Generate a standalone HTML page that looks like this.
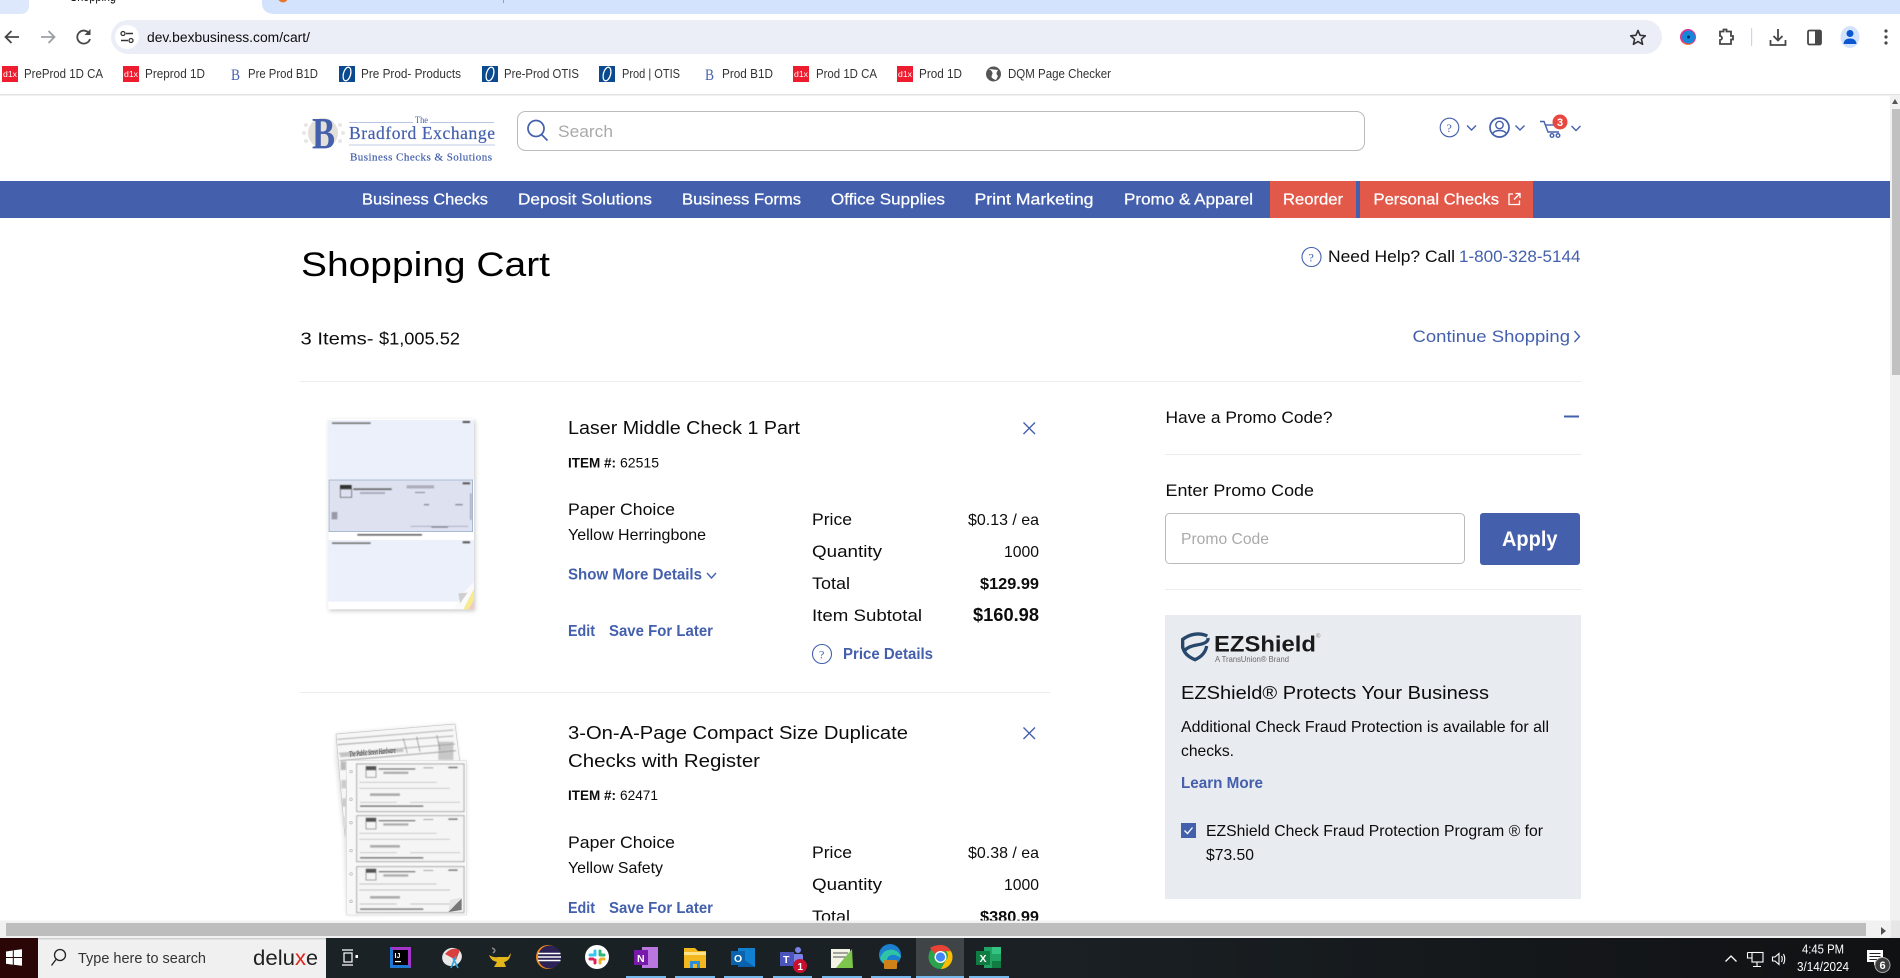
<!DOCTYPE html>
<html lang="en">
<head>
<meta charset="utf-8">
<title>Shopping Cart</title>
<style>
html,body{margin:0;padding:0;width:1900px;height:978px;overflow:hidden;background:#fff}
svg{display:block;position:absolute;left:0;top:0}
text{font-family:"Liberation Sans",sans-serif;fill:#0c0c0c;white-space:pre}
.serif{font-family:"Liberation Serif",serif}
.b{font-weight:700}
.blue{fill:#4460ad}
.bm{font-size:12.5px;fill:#333}
.w{fill:#fff}
.nav{font-size:16px;fill:#fff;font-weight:400;stroke:#fff;stroke-width:.25px}
.st{fill:none;stroke:#4460ad;stroke-width:1.4}
.tb{fill:none;stroke:#474747;stroke-width:1.8}
</style>
</head>
<body>
<svg width="1900" height="978" viewBox="0 0 1900 978" xmlns="http://www.w3.org/2000/svg">
<defs>
<filter id="bl" x="-10%" y="-10%" width="120%" height="120%"><feGaussianBlur stdDeviation="1.8"/></filter>
<filter id="sh" x="-10%" y="-10%" width="120%" height="120%"><feGaussianBlur stdDeviation="6"/></filter>
<linearGradient id="tbg" x1="0" x2="1" y1="0" y2="0"><stop offset="0" stop-color="#1b2327"/><stop offset=".55" stop-color="#1a2024"/><stop offset="1" stop-color="#101113"/></linearGradient>
</defs>

<!-- Browser chrome -->
<rect width="1900" height="95" fill="#fff"/>
<path d="M262 0H1900V14H276Q262 14 262 3Z" fill="#d3e3fd"/>
<path d="M0 0H29V5Q29 14 20 14H0Z" fill="#dde8fd"/>
<text x="70" y="1" font-size="13" fill="#333" textLength="46" lengthAdjust="spacingAndGlyphs">Shopping</text>
<circle cx="283" cy="-2.500" r="5" fill="#e8772e"/>
<rect x="503" y="0" width="1" height="3" fill="#8aa"/>

<path class="tb" d="M19 37H6M11.500 31L5.500 37L11.500 43"/>
<path fill="none" stroke="#9aa0a6" stroke-width="1.800" d="M41 37H54M48.500 31L54.500 37L48.500 43"/>
<path class="tb" d="M89.500 34A6.500 6.500 0 1 0 90 39"/>
<path d="M90.500 29V35H84.500Z" fill="#474747"/>

<rect x="111" y="20" width="1551" height="34" rx="17" fill="#ebeef7"/>
<circle cx="127" cy="37" r="12" fill="#fff"/>
<path fill="none" stroke="#333" stroke-width="1.400" d="M126 33.500H133M121 40.500H128"/>
<circle cx="123" cy="33.500" r="2" fill="none" stroke="#333" stroke-width="1.300"/>
<circle cx="131" cy="40.500" r="2" fill="none" stroke="#333" stroke-width="1.300"/>
<text x="147" y="42" font-size="13.500" fill="#222" textLength="163" lengthAdjust="spacingAndGlyphs">dev.bexbusiness.com/cart/</text>

<path fill="none" stroke="#333" stroke-width="1.600" stroke-linejoin="round" d="M1638 30.500L1640.100 35.300L1645.300 35.800L1641.400 39.200L1642.600 44.300L1638 41.600L1633.400 44.300L1634.600 39.200L1630.700 35.800L1635.900 35.300Z"/>
<circle cx="1688" cy="37" r="8" fill="#e0338f"/>
<circle cx="1688.500" cy="37" r="6.500" fill="#1487d9"/>
<path d="M1681 40Q1688 48 1695 40Q1691 45 1688 45Q1684 45 1681 40Z" fill="#f58a1f"/>
<circle cx="1688.500" cy="37" r="1.500" fill="#0a2e66"/>
<path class="tb" d="M1720 31.500H1723.500V29.500H1726.500V31.500H1731V36H1733V39.500H1731V44H1720V40A2 2 0 0 0 1720 36Z"/>
<rect x="1751" y="28" width="1.200" height="18" fill="#c7d6f0"/>
<path class="tb" d="M1778 29V40M1773.500 36L1778 40.500L1782.500 36M1770.500 40V45H1785.500V40"/>
<rect x="1808" y="30.500" width="13" height="14" rx="1.500" fill="none" stroke="#474747" stroke-width="1.800"/>
<rect x="1815" y="30.500" width="6" height="14" fill="#474747"/>
<ellipse cx="1850" cy="37" rx="9.500" ry="11" fill="#d3e3fd"/>
<circle cx="1850" cy="33.500" r="3.500" fill="#0b57d0"/>
<path d="M1843.500 44Q1844 38.500 1850 38.500Q1856 38.500 1856.500 44Z" fill="#0b57d0"/>
<circle cx="1886" cy="31" r="1.600" fill="#474747"/><circle cx="1886" cy="37" r="1.600" fill="#474747"/><circle cx="1886" cy="43" r="1.600" fill="#474747"/>

<!-- Bookmarks -->
<rect x="2" y="66" width="16" height="16" fill="#ed1c2e"/><text x="3" y="77" font-size="8.500" class="w" textLength="14" lengthAdjust="spacingAndGlyphs">d1x</text>
<text x="24" y="78" class="bm" textLength="79" lengthAdjust="spacingAndGlyphs">PreProd 1D CA</text>
<rect x="123" y="66" width="16" height="16" fill="#ed1c2e"/><text x="124" y="77" font-size="8.500" class="w" textLength="14" lengthAdjust="spacingAndGlyphs">d1x</text>
<text x="145" y="78" class="bm" textLength="60" lengthAdjust="spacingAndGlyphs">Preprod 1D</text>
<text x="231" y="80" class="serif blue" font-size="16" textLength="9" lengthAdjust="spacingAndGlyphs">B</text>
<text x="248" y="78" class="bm" textLength="70" lengthAdjust="spacingAndGlyphs">Pre Prod B1D</text>
<rect x="339" y="66" width="16" height="16" fill="#0b4a8f"/><ellipse cx="347" cy="74" rx="3.600" ry="7" transform="rotate(15 347 74)" fill="none" stroke="#fff" stroke-width="1.300"/>
<text x="361" y="78" class="bm" textLength="100" lengthAdjust="spacingAndGlyphs">Pre Prod- Products</text>
<rect x="482" y="66" width="16" height="16" fill="#0b4a8f"/><ellipse cx="490" cy="74" rx="3.600" ry="7" transform="rotate(15 490 74)" fill="none" stroke="#fff" stroke-width="1.300"/>
<text x="504" y="78" class="bm" textLength="75" lengthAdjust="spacingAndGlyphs">Pre-Prod OTIS</text>
<rect x="599" y="66" width="16" height="16" fill="#0b4a8f"/><ellipse cx="607" cy="74" rx="3.600" ry="7" transform="rotate(15 607 74)" fill="none" stroke="#fff" stroke-width="1.300"/>
<text x="622" y="78" class="bm" textLength="58" lengthAdjust="spacingAndGlyphs">Prod | OTIS</text>
<text x="705" y="80" class="serif blue" font-size="16" textLength="9" lengthAdjust="spacingAndGlyphs">B</text>
<text x="722" y="78" class="bm" textLength="51" lengthAdjust="spacingAndGlyphs">Prod B1D</text>
<rect x="793" y="66" width="16" height="16" fill="#ed1c2e"/><text x="794" y="77" font-size="8.500" class="w" textLength="14" lengthAdjust="spacingAndGlyphs">d1x</text>
<text x="816" y="78" class="bm" textLength="61" lengthAdjust="spacingAndGlyphs">Prod 1D CA</text>
<rect x="897" y="66" width="16" height="16" fill="#ed1c2e"/><text x="898" y="77" font-size="8.500" class="w" textLength="14" lengthAdjust="spacingAndGlyphs">d1x</text>
<text x="919" y="78" class="bm" textLength="43" lengthAdjust="spacingAndGlyphs">Prod 1D</text>
<circle cx="993.500" cy="74" r="7.500" fill="#555"/><path d="M989 69Q994 72 992 75T996 80L998 76Q995 74 998 70Z" fill="#fff"/>
<text x="1008" y="78" class="bm" textLength="103" lengthAdjust="spacingAndGlyphs">DQM Page Checker</text>
<rect y="94" width="1900" height="1.500" fill="#e3e3e3"/>

<!-- Logo -->
<circle cx="323" cy="133" r="15" fill="#e3e0da"/>
<g fill="#e8e7e3"><circle cx="306" cy="125" r="2"/><circle cx="304" cy="133" r="2"/><circle cx="306" cy="141" r="2"/><circle cx="340" cy="125" r="2"/><circle cx="343" cy="133" r="2"/><circle cx="340" cy="141" r="2"/></g>
<text x="312" y="148" class="serif b" font-size="44" style="fill:#4460ad" textLength="23" lengthAdjust="spacingAndGlyphs">B</text>
<rect x="349" y="122" width="64" height="1" fill="#b9c6e4"/><rect x="430" y="122" width="64" height="1" fill="#b9c6e4"/>
<text x="415" y="123" class="serif blue" font-size="9" textLength="13" lengthAdjust="spacingAndGlyphs">The</text>
<text x="349" y="139" class="serif blue" font-size="17.500" textLength="146" lengthAdjust="spacing" style="stroke:#4460ad;stroke-width:.2px">Bradford Exchange</text>
<rect x="349" y="144" width="146" height="2" fill="#dfe5f3"/>
<text x="350" y="160.500" class="serif blue" font-size="11" textLength="142" lengthAdjust="spacing" style="stroke:#4460ad;stroke-width:.2px">Business Checks &amp; Solutions</text>

<!-- Search -->
<rect x="517.500" y="111.500" width="847" height="39" rx="8" fill="#fff" stroke="#bbb" stroke-width="1"/>
<circle cx="536" cy="128.500" r="8" fill="none" stroke="#4460ad" stroke-width="1.700"/>
<path d="M541.500 134.500L547.500 140.500" stroke="#4460ad" stroke-width="1.700"/>
<text x="558" y="137" font-size="16.500" style="fill:#aaa" textLength="55" lengthAdjust="spacingAndGlyphs">Search</text>

<!-- Header icons -->
<circle cx="1449.500" cy="127.500" r="9.300" class="st" style="stroke-width:1.100"/>
<text x="1446.500" y="132" font-size="12" class="blue" style="font-family:'Liberation Serif',serif">?</text>
<path class="st" d="M1467 125.500L1471.500 130L1476 125.500"/>
<circle cx="1499.500" cy="127.500" r="9.500" class="st" style="stroke-width:1.700"/>
<circle cx="1499.500" cy="125" r="3.700" class="st"/>
<path class="st" d="M1492.500 134Q1494 130.500 1499.500 130.500Q1505 130.500 1506.500 134"/>
<path class="st" d="M1515.500 125.500L1520 130L1524.500 125.500"/>
<path class="st" d="M1540 121.500H1544L1548 132H1559"/>
<circle cx="1552" cy="135.500" r="1.800" class="st"/><circle cx="1558" cy="135.500" r="1.800" class="st"/>
<path class="st" d="M1545 125H1559"/>
<circle cx="1560" cy="122" r="7.500" fill="#e8473f"/>
<text x="1557" y="126" font-size="11" class="w b">3</text>
<path class="st" d="M1571.500 126L1576 130.500L1580.500 126"/>

<!-- Nav -->
<rect y="181" width="1890" height="37" fill="#4460ad"/>
<rect x="1270" y="181" width="86" height="37" fill="#e25849"/>
<rect x="1360" y="181" width="173" height="37" fill="#e25849"/>
<text x="362" y="204.500" class="nav" textLength="126" lengthAdjust="spacingAndGlyphs">Business Checks</text>
<text x="518" y="204.500" class="nav" textLength="134" lengthAdjust="spacingAndGlyphs">Deposit Solutions</text>
<text x="682" y="204.500" class="nav" textLength="119" lengthAdjust="spacingAndGlyphs">Business Forms</text>
<text x="831" y="204.500" class="nav" textLength="114" lengthAdjust="spacingAndGlyphs">Office Supplies</text>
<text x="974.500" y="204.500" class="nav" textLength="119" lengthAdjust="spacingAndGlyphs">Print Marketing</text>
<text x="1124" y="204.500" class="nav" textLength="129" lengthAdjust="spacingAndGlyphs">Promo &amp; Apparel</text>
<text x="1283" y="204.500" class="nav" textLength="60" lengthAdjust="spacingAndGlyphs">Reorder</text>
<text x="1373.500" y="204.500" class="nav" textLength="125.500" lengthAdjust="spacingAndGlyphs">Personal Checks</text>
<path fill="none" stroke="#fff" stroke-width="1.300" d="M1513 194H1509V204.500H1519.500V200.500M1514 199.500L1519.500 194M1515.500 193.500H1520V198"/>

<!-- Heading -->
<text x="301" y="276" font-size="34" textLength="249" lengthAdjust="spacingAndGlyphs" style="fill:#000">Shopping Cart</text>
<circle cx="1311.500" cy="257" r="9.500" class="st" style="stroke-width:1.100"/>
<text x="1308.500" y="261.500" font-size="12" class="blue" style="font-family:'Liberation Serif',serif">?</text>
<text x="1328" y="262" font-size="16.500" textLength="127" lengthAdjust="spacingAndGlyphs">Need Help? Call</text>
<text x="1459" y="262" font-size="16.500" class="blue" textLength="121.500" lengthAdjust="spacingAndGlyphs">1-800-328-5144</text>
<text x="300.500" y="344.500" font-size="17.500" textLength="73" lengthAdjust="spacingAndGlyphs">3 Items-</text>
<text x="379" y="344.500" font-size="17.500" textLength="81" lengthAdjust="spacingAndGlyphs">$1,005.52</text>
<text x="1412.500" y="342" font-size="16.500" class="blue" textLength="157.500" lengthAdjust="spacingAndGlyphs">Continue Shopping</text>
<path class="st" d="M1574.500 331L1579.500 336.500L1574.500 342"/>
<rect x="300" y="381" width="1281" height="1" fill="#ececec"/>

<!-- Item 1 image -->
<g transform="translate(300 400) scale(.33333)">
<rect x="88" y="62" width="437" height="571" fill="#999" opacity=".55" filter="url(#sh)"/>
<rect x="85" y="57" width="437" height="571" fill="#fff"/>
<rect x="85" y="60" width="437" height="180" fill="#ebf0fa"/>
<rect x="87" y="240" width="431" height="155" fill="#dde1f0" stroke="#8fa7c3" stroke-width="2"/>
<rect x="85" y="420" width="437" height="185" fill="#ebf0fa"/>
<g filter="url(#bl)">
<rect x="96" y="67" width="116" height="5" fill="#777"/>
<rect x="488" y="63" width="22" height="6" fill="#555"/>
<rect x="120" y="255" width="35" height="12" fill="#333"/>
<rect x="121" y="267" width="34" height="25" fill="none" stroke="#555" stroke-width="2"/>
<rect x="160" y="265" width="115" height="5" fill="#666"/>
<rect x="180" y="276" width="75" height="6" fill="#aab"/>
<rect x="320" y="256" width="82" height="9" fill="#aab"/>
<rect x="345" y="276" width="30" height="3" fill="#889"/>
<rect x="372" y="312" width="15" height="4" fill="#889"/><rect x="466" y="312" width="22" height="4" fill="#889"/>
<rect x="488" y="247" width="22" height="6" fill="#555"/>
<rect x="510" y="280" width="5" height="80" fill="#aab"/>
<rect x="95" y="336" width="17" height="22" fill="#99a"/>
<rect x="332" y="378" width="172" height="2" fill="#99a"/>
<rect x="394" y="380" width="50" height="3" fill="#778"/>
<rect x="172" y="402" width="194" height="5" fill="#666"/>
<rect x="96" y="427" width="116" height="5" fill="#777"/>
<rect x="488" y="424" width="22" height="6" fill="#555"/>
</g>
<path d="M495 628L522 580V628Z" fill="#f0c9cb"/>
<path d="M522 565L490 628H505L522 600Z" fill="#f6eb8e"/>
<path d="M520 548Q500 560 462 626L490 628L522 565Z" fill="#fafafa"/>
<path d="M475 580L503 578L480 610Z" fill="#cfcfcf"/>
</g>

<!-- Item 1 details -->
<text x="568" y="434" font-size="18" textLength="232" lengthAdjust="spacingAndGlyphs">Laser Middle Check 1 Part</text>
<path d="M1023.500 422.500L1035 434M1035 422.500L1023.500 434" class="st"/>
<text x="568" y="467.500" font-size="13.500" class="b" textLength="48" lengthAdjust="spacingAndGlyphs">ITEM #:</text>
<text x="620" y="467.500" font-size="13.500" textLength="39" lengthAdjust="spacingAndGlyphs">62515</text>
<text x="568" y="515" font-size="16.500" textLength="107" lengthAdjust="spacingAndGlyphs">Paper Choice</text>
<text x="568" y="540" font-size="16" textLength="138" lengthAdjust="spacingAndGlyphs">Yellow Herringbone</text>
<text x="568" y="579.500" font-size="16" class="b blue" textLength="134" lengthAdjust="spacingAndGlyphs">Show More Details</text>
<path class="st" d="M707 573L711.500 578L716 573"/>
<text x="568" y="636" font-size="16" class="b blue" textLength="27" lengthAdjust="spacingAndGlyphs">Edit</text>
<text x="609" y="636" font-size="16" class="b blue" textLength="104" lengthAdjust="spacingAndGlyphs">Save For Later</text>

<text x="812" y="525" font-size="16.500" textLength="40" lengthAdjust="spacingAndGlyphs">Price</text>
<text x="968" y="525" font-size="16" textLength="71" lengthAdjust="spacingAndGlyphs">$0.13 / ea</text>
<text x="812" y="557" font-size="16.500" textLength="70" lengthAdjust="spacingAndGlyphs">Quantity</text>
<text x="1004" y="557" font-size="16" textLength="35" lengthAdjust="spacingAndGlyphs">1000</text>
<text x="812" y="589" font-size="16.500" textLength="38" lengthAdjust="spacingAndGlyphs">Total</text>
<text x="980" y="589" font-size="16" class="b" textLength="59" lengthAdjust="spacingAndGlyphs">$129.99</text>
<text x="812" y="621" font-size="16.500" textLength="110" lengthAdjust="spacingAndGlyphs">Item Subtotal</text>
<text x="973" y="621" font-size="18" class="b" textLength="66" lengthAdjust="spacingAndGlyphs">$160.98</text>
<circle cx="822" cy="654" r="9.500" class="st" style="stroke-width:1.100"/>
<text x="819" y="658.500" font-size="12" class="blue" style="font-family:'Liberation Serif',serif">?</text>
<text x="843" y="659" font-size="16" class="b blue" textLength="90" lengthAdjust="spacingAndGlyphs">Price Details</text>
<rect x="300" y="692" width="750" height="1" fill="#ececec"/>

<!-- Item 2 image -->
<g transform="translate(320 710) scale(.33333)">
<path d="M48 72L405 42L418 155L440 155V610L80 615L72 380L48 150Z" fill="#000" opacity=".12" filter="url(#sh)"/>
<path d="M48 72L405 42L420 160L80 200L75 380Z" fill="#f6f6f6" stroke="#c8c8c8" stroke-width="2"/>
<g filter="url(#bl)">
<path d="M52 88L400 60M53 104L400 78M56 130L405 102M60 152L408 122M250 85L262 130M290 80L300 125M350 75L360 120" stroke="#888" stroke-width="2"/>
<rect x="60" y="130" width="190" height="12" fill="#c4c4c4" transform="rotate(-5 60 130)"/>
<rect x="355" y="95" width="45" height="55" fill="#999" opacity=".5"/>
<rect x="62" y="155" width="16" height="25" fill="#bbb"/><rect x="64" y="210" width="16" height="25" fill="#ccc"/><rect x="66" y="265" width="16" height="25" fill="#ccc"/><rect x="68" y="320" width="14" height="25" fill="#ddd"/>
</g>
<text x="88" y="140" font-size="25" class="serif" font-style="italic" style="fill:#333" transform="rotate(-5 88 140)" textLength="140" lengthAdjust="spacingAndGlyphs">The Public Street Hardware</text>
<rect x="80" y="152" width="360" height="463" fill="#f8f8f8" stroke="#ddd" stroke-width="2"/>
<g fill="#eee" stroke="#bbb" stroke-width="2"><circle cx="93" cy="185" r="4"/><circle cx="93" cy="268" r="4"/><circle cx="93" cy="338" r="4"/><circle cx="93" cy="422" r="4"/><circle cx="93" cy="492" r="4"/><circle cx="93" cy="574" r="4"/></g>
<g filter="url(#bl)">
<rect x="110" y="162" width="322" height="143" fill="#f5f5f5" stroke="#888" stroke-width="3" stroke-dasharray="3 1"/>
<rect x="137" y="168" width="32" height="12" fill="#555"/><rect x="138" y="180" width="30" height="22" fill="none" stroke="#666" stroke-width="2"/><rect x="176" y="175" width="110" height="4" fill="#666"/><rect x="190" y="185" width="75" height="7" fill="#aaa"/>
<rect x="385" y="170" width="28" height="5" fill="#777"/><rect x="310" y="172" width="30" height="3" fill="#999"/><path d="M118 217H350M118 235H390M120 277H230M270 277H420" stroke="#aaa" stroke-width="2"/>
<rect x="150" y="250" width="90" height="8" fill="#aaa"/><rect x="120" y="286" width="190" height="5" fill="#777"/>
<rect x="110" y="317" width="322" height="138" fill="#f5f5f5" stroke="#888" stroke-width="3" stroke-dasharray="3 1"/>
<rect x="137" y="323" width="32" height="12" fill="#555"/><rect x="138" y="335" width="30" height="22" fill="none" stroke="#666" stroke-width="2"/><rect x="176" y="330" width="110" height="4" fill="#666"/><rect x="190" y="340" width="75" height="7" fill="#aaa"/>
<rect x="385" y="325" width="28" height="5" fill="#777"/><rect x="310" y="327" width="30" height="3" fill="#999"/><path d="M118 370H350M118 388H390M120 428H230M270 428H420" stroke="#aaa" stroke-width="2"/>
<rect x="150" y="405" width="90" height="8" fill="#aaa"/><rect x="120" y="441" width="190" height="5" fill="#777"/>
<rect x="110" y="470" width="322" height="138" fill="#f5f5f5" stroke="#888" stroke-width="3" stroke-dasharray="3 1"/>
<rect x="137" y="476" width="32" height="12" fill="#555"/><rect x="138" y="488" width="30" height="22" fill="none" stroke="#666" stroke-width="2"/><rect x="176" y="483" width="110" height="4" fill="#666"/><rect x="190" y="493" width="75" height="7" fill="#aaa"/>
<rect x="385" y="478" width="28" height="5" fill="#777"/><rect x="310" y="480" width="30" height="3" fill="#999"/><path d="M118 522H350M118 540H390M120 582H230M270 582H420" stroke="#aaa" stroke-width="2"/>
<rect x="150" y="558" width="90" height="8" fill="#aaa"/><rect x="120" y="595" width="190" height="5" fill="#777"/>
</g>
<path d="M385 606L425 565V600Z" fill="#777"/>
<path d="M385 606L390 570L425 562Z" fill="#e4e4e4"/>
</g>

<!-- Item 2 details -->
<text x="568" y="739" font-size="18" textLength="340" lengthAdjust="spacingAndGlyphs">3-On-A-Page Compact Size Duplicate</text>
<text x="568" y="767" font-size="18" textLength="192" lengthAdjust="spacingAndGlyphs">Checks with Register</text>
<path d="M1023.500 727.500L1035 739M1035 727.500L1023.500 739" class="st"/>
<text x="568" y="800" font-size="13.500" class="b" textLength="48" lengthAdjust="spacingAndGlyphs">ITEM #:</text>
<text x="620" y="800" font-size="13.500" textLength="38" lengthAdjust="spacingAndGlyphs">62471</text>
<text x="568" y="848" font-size="16.500" textLength="107" lengthAdjust="spacingAndGlyphs">Paper Choice</text>
<text x="568" y="873" font-size="16" textLength="95" lengthAdjust="spacingAndGlyphs">Yellow Safety</text>
<text x="568" y="913" font-size="16" class="b blue" textLength="27" lengthAdjust="spacingAndGlyphs">Edit</text>
<text x="609" y="913" font-size="16" class="b blue" textLength="104" lengthAdjust="spacingAndGlyphs">Save For Later</text>
<text x="812" y="858" font-size="16.500" textLength="40" lengthAdjust="spacingAndGlyphs">Price</text>
<text x="968" y="858" font-size="16" textLength="71" lengthAdjust="spacingAndGlyphs">$0.38 / ea</text>
<text x="812" y="890" font-size="16.500" textLength="70" lengthAdjust="spacingAndGlyphs">Quantity</text>
<text x="1004" y="890" font-size="16" textLength="35" lengthAdjust="spacingAndGlyphs">1000</text>
<text x="812" y="922" font-size="16.500" textLength="38" lengthAdjust="spacingAndGlyphs">Total</text>
<text x="980" y="922" font-size="16" class="b" textLength="59" lengthAdjust="spacingAndGlyphs">$380.99</text>

<!-- Promo column -->
<text x="1165.500" y="423" font-size="16.500" textLength="167" lengthAdjust="spacingAndGlyphs">Have a Promo Code?</text>
<rect x="1564" y="415.500" width="15" height="2" fill="#4460ad"/>
<rect x="1165" y="454" width="416" height="1" fill="#ececec"/>
<text x="1165.500" y="496" font-size="16.500" textLength="148.500" lengthAdjust="spacingAndGlyphs">Enter Promo Code</text>
<rect x="1165.500" y="513.500" width="299" height="50" rx="4" fill="#fff" stroke="#bbb" stroke-width="1"/>
<text x="1181" y="544" font-size="16" style="fill:#aaa" textLength="88" lengthAdjust="spacingAndGlyphs">Promo Code</text>
<rect x="1480" y="513" width="100" height="52" rx="3" fill="#4460ad"/>
<text x="1502" y="546" font-size="21" class="b w" textLength="55.500" lengthAdjust="spacingAndGlyphs">Apply</text>
<rect x="1165" y="589" width="416" height="1" fill="#ececec"/>

<!-- EZShield -->
<rect x="1165" y="615" width="416" height="284" fill="#e8ebf0"/>
<g transform="translate(1150 390) scale(.33333)" fill="none" stroke="#27486b" stroke-width="10">
<path d="M98 775V748Q135 722 172 738"/>
<path d="M174 744Q176 760 140 765Q112 770 104 782"/>
<path d="M98 770Q102 796 135 809Q165 796 170 768"/>
</g>
<text x="1214" y="651.500" font-size="22" class="b" style="fill:#1a1a1a" textLength="102" lengthAdjust="spacingAndGlyphs">EZShield</text>
<text x="1316" y="638" font-size="6" style="fill:#888">®</text>
<text x="1215" y="662" font-size="8.500" style="fill:#6a6a6a" textLength="74" lengthAdjust="spacingAndGlyphs">A TransUnion® Brand</text>
<text x="1181" y="699" font-size="18.500" textLength="308" lengthAdjust="spacingAndGlyphs">EZShield® Protects Your Business</text>
<text x="1181" y="732" font-size="16" textLength="368" lengthAdjust="spacingAndGlyphs">Additional Check Fraud Protection is available for all</text>
<text x="1181" y="756" font-size="16" textLength="53" lengthAdjust="spacingAndGlyphs">checks.</text>
<text x="1181" y="788" font-size="16" class="b blue" textLength="82" lengthAdjust="spacingAndGlyphs">Learn More</text>
<rect x="1181" y="823" width="15" height="15" fill="#4460ad"/>
<path d="M1184.500 830.500L1187.500 833.500L1192.500 827.500" fill="none" stroke="#fff" stroke-width="1.300"/>
<text x="1206" y="836" font-size="16" textLength="337" lengthAdjust="spacingAndGlyphs">EZShield Check Fraud Protection Program ® for</text>
<text x="1206" y="860" font-size="16" textLength="48" lengthAdjust="spacingAndGlyphs">$73.50</text>

<!-- Vertical scrollbar -->
<rect x="1890" y="95" width="10" height="826" fill="#f1f1f1"/>
<path d="M1895 99L1892 104H1898Z" fill="#555"/>
<rect x="1892" y="109" width="8" height="266" fill="#c1c1c1"/>

<!-- Horizontal scrollbar -->
<rect x="0" y="920.500" width="1900" height="17.500" fill="#f1f1f1"/>
<rect x="6" y="923" width="1860" height="13" fill="#bdbdbd"/>
<path d="M1881 927V935L1886 931Z" fill="#505050"/>
<rect x="1891" y="920.500" width="9" height="17.500" fill="#e6e6e6"/>

<!-- Taskbar -->
<rect y="938" width="1900" height="40" fill="url(#tbg)"/>
<rect width="38" height="40" y="938" fill="#2b0606"/>
<path fill="#fff" d="M6 951.500L12.800 950.500V957H6ZM13.800 950.300L22 949.200V957H13.800ZM6 958H12.800V964.700L6 963.700ZM13.800 958H22V965.800L13.800 964.800Z"/>
<rect x="38" y="938" width="288" height="40" fill="#f0f0f0"/>
<rect x="38" y="938" width="288" height="1.500" fill="#cfcfcf"/>
<circle cx="60" cy="955" r="5.500" fill="none" stroke="#222" stroke-width="1.300"/>
<path d="M56 959.500L51.500 965.500" stroke="#222" stroke-width="1.300"/>
<text x="78" y="963" font-size="14.500" style="fill:#333" textLength="128" lengthAdjust="spacingAndGlyphs">Type here to search</text>
<text x="253" y="965" font-size="21" style="fill:#222" textLength="42" lengthAdjust="spacingAndGlyphs">delu</text>
<text x="295" y="965" font-size="21" style="fill:#e2231a" textLength="11" lengthAdjust="spacingAndGlyphs">x</text>
<text x="306" y="965" font-size="21" style="fill:#222" textLength="12" lengthAdjust="spacingAndGlyphs">e</text>

<!-- task view -->
<g fill="none" stroke="#fff" stroke-width="1.200"><path d="M342 950H353M342 965H353"/><rect x="344" y="953" width="8" height="9"/></g>
<rect x="355.500" y="955" width="2.500" height="3" fill="#fff"/>
<!-- IntelliJ -->
<rect x="390" y="947" width="21" height="21" fill="#1f78d1"/>
<path d="M390 947H411V968Z" fill="#a534c9"/><rect x="393" y="950" width="15" height="15" fill="#000"/>
<text x="394.500" y="958" font-size="7" class="w b">IJ</text><rect x="395" y="961" width="6" height="1.200" fill="#fff"/>
<!-- Snip -->
<ellipse cx="452" cy="957" rx="10" ry="9" fill="#e8e8e8" transform="rotate(-20 452 957)"/>
<path d="M445 954Q452 946 460 950L456 960Z" fill="#d84040"/>
<path d="M453 958L458 968M456 956L451 968" stroke="#29a5e0" stroke-width="1.600"/>
<!-- Lamp -->
<path d="M489 955Q494 958 498 957H508L511 953Q510 961 504 962L506 967H494L497 962Q491 961 489 955Z" fill="#e3b71c"/>
<path d="M492 948Q497 950 493 953" stroke="#888" stroke-width="1.600" fill="none"/>
<!-- Eclipse -->
<circle cx="548" cy="957" r="12" fill="#f28a1a"/>
<circle cx="549.500" cy="957" r="11.500" fill="#2c2255"/>
<path d="M538 953.500H560.500M538 957H561M538 960.500H560.500" stroke="#fff" stroke-width="1.500"/>
<!-- Slack -->
<circle cx="597" cy="957" r="12" fill="#fff"/>
<g stroke-width="3" stroke-linecap="round"><path d="M595 951V955" stroke="#36c5f0"/><path d="M590 955H593" stroke="#36c5f0"/><path d="M600 951V955" stroke="#2eb67d"/><path d="M601 955H604" stroke="#2eb67d"/><path d="M600 960V963" stroke="#ecb22e"/><path d="M601 959H604" stroke="#ecb22e"/><path d="M595 960V963" stroke="#e01e5a"/><path d="M590 959H593" stroke="#e01e5a"/></g>
<!-- OneNote -->
<rect x="642" y="947" width="16" height="21" fill="#ba77e0"/>
<rect x="634" y="950" width="14" height="15" fill="#7719aa"/>
<text x="637" y="962" font-size="10.500" class="w b">N</text>
<!-- Files -->
<path d="M684 948H695L698 951H706V968H684Z" fill="#f3b81f"/>
<rect x="684" y="952" width="22" height="3" fill="#fde38a"/>
<path d="M690 968V961H700V968H697V964H693V968Z" fill="#2d8dd6"/>
<!-- Outlook -->
<rect x="738" y="948" width="17" height="19" fill="#1280d0"/>
<path d="M738 956L755 967H738Z" fill="#0a5fa8"/>
<rect x="731" y="951" width="14" height="14" fill="#0a64ad"/>
<text x="734" y="962" font-size="10.500" class="w b">O</text>
<!-- Teams -->
<circle cx="798" cy="950" r="3" fill="#7b83eb"/>
<rect x="792" y="954" width="11" height="12" rx="2" fill="#7b83eb"/>
<rect x="780" y="952" width="14" height="14" fill="#4b53bc"/>
<text x="783" y="963" font-size="10.500" class="w b">T</text>
<circle cx="800" cy="966" r="7" fill="#c8102e"/>
<text x="797.500" y="970" font-size="10" class="w b">1</text>
<!-- Notepad -->
<rect x="831" y="949" width="19" height="19" fill="#f3f3e6"/>
<path d="M833 953H848M833 957H848" stroke="#555" stroke-width="1"/>
<path d="M836 968L852 949L853 968Z" fill="#7cc44b"/>
<!-- Edge -->
<circle cx="890" cy="955" r="11" fill="#1c7fd0"/>
<path d="M880 958Q884 948 894 950Q900 952 901 958Q893 952 888 957Q885 962 890 966Q883 965 880 958Z" fill="#2ec4a5"/>
<rect x="884" y="960" width="13" height="9" rx="1" fill="#d0821a"/>
<!-- Chrome -->
<rect x="916" y="938" width="48" height="40" fill="#3f4447"/>
<circle cx="940.500" cy="957" r="12" fill="#2ba24c"/>
<path d="M940.500 945A12 12 0 0 1 951 951.200H940.500A6 6 0 0 0 935 954L930 948Q934 945 940.500 945Z" fill="#ea4335"/>
<path d="M951 951.200A12 12 0 0 1 941 969L946 960A6 6 0 0 0 946 951.200Z" fill="#fbbc04"/>
<circle cx="940.500" cy="957" r="6" fill="#fff"/>
<circle cx="940.500" cy="957" r="4.600" fill="#4285f4"/>
<!-- Excel -->
<rect x="984" y="947" width="17" height="21" fill="#21a366"/>
<rect x="992" y="947" width="9" height="7" fill="#33c481"/><rect x="992" y="961" width="9" height="7" fill="#107c41"/>
<rect x="976" y="951" width="14" height="14" fill="#107c41"/>
<text x="979.500" y="962" font-size="10.500" class="w b">X</text>
<!-- taskbar underline -->
<g fill="#76b9ed"><rect x="626" y="976" width="40" height="2"/><rect x="675" y="976" width="40" height="2"/><rect x="724" y="976" width="39" height="2"/><rect x="773" y="976" width="39" height="2"/><rect x="822" y="976" width="40" height="2"/><rect x="871" y="976" width="40" height="2"/><rect x="916" y="976" width="48" height="2"/><rect x="969" y="976" width="40" height="2"/></g>

<!-- Tray -->
<path d="M1725.500 961.500L1731 956L1736.500 961.500" fill="none" stroke="#fff" stroke-width="1.300"/>
<g fill="none" stroke="#fff" stroke-width="1.100">
<rect x="1752" y="952.500" width="11" height="9.500"/><path d="M1747.500 952.500H1752M1747.500 952.500V958H1752M1757 962V966M1753 966.500H1761"/>
<path d="M1772.500 957V961H1775L1779 964.500V953.500L1775 957ZM1781.500 956Q1783 959 1781.500 962M1783.500 954Q1786 959 1783.500 964"/>
</g>
<text x="1802" y="953.500" font-size="13" class="w" textLength="42" lengthAdjust="spacingAndGlyphs">4:45 PM</text>
<text x="1797" y="971" font-size="13" class="w" textLength="52" lengthAdjust="spacingAndGlyphs">3/14/2024</text>
<path d="M1867 950H1883V962H1877L1874 965.500V962H1867Z" fill="#fff"/>
<path d="M1869.500 953.500H1880.500M1869.500 956.500H1880.500M1869.500 959.500H1877" stroke="#222" stroke-width="1"/>
<circle cx="1882.500" cy="965" r="7.500" fill="#3c3c3c" stroke="#aaa" stroke-width="1"/>
<text x="1879.500" y="969" font-size="11" class="w b">6</text>
</svg>
</body>
</html>
